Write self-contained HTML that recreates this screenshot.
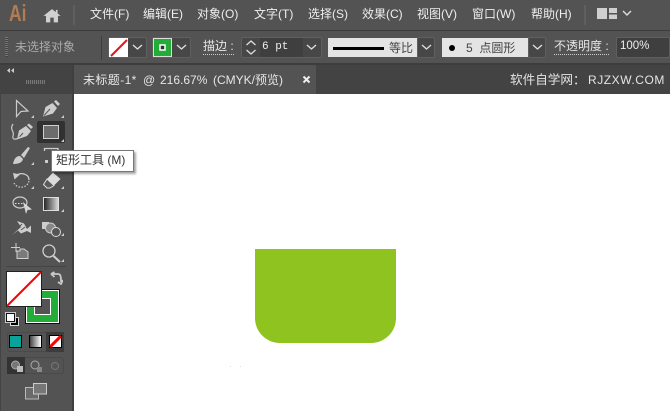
<!DOCTYPE html>
<html lang="zh"><head><meta charset="utf-8"><style>
html,body{margin:0;padding:0;background:#535353}
#a{position:relative;width:670px;height:411px;overflow:hidden;background:#535353;font-family:"Liberation Sans","Noto Sans CJK SC",sans-serif;color:#e6e6e6}
#a div,#a span.t,#a svg{position:absolute}
.t{position:absolute;white-space:nowrap;line-height:16px;font-size:12px}
.m{top:6px;color:#eee}
.dd{background:#474747;border:1px solid #5f5f5f;box-sizing:border-box;border-radius:2px}
</style></head><body><div id="a">
<div style="left:0;top:30px;width:670px;height:1px;background:#3c3c3c"></div>
<div style="left:0;top:64px;width:670px;height:30px;background:#434343"></div>
<div style="left:0;top:63px;width:670px;height:2px;background:#3d3d3d"></div>

<span class="t" style="left:9px;top:0;font-size:23px;line-height:27px;font-weight:bold;color:#b17b55;transform:scaleX(.76);transform-origin:left">Ai</span>
<svg style="left:43px;top:8px" width="18" height="15" viewBox="0 0 21 17"><path d="M10.500 1L0.500 9H3.500V16.500H8.500V11H12.500V16.500H17.500V9H20.500L17 6V2H15V4.500Z" fill="#d0d0d0"/></svg>
<div style="left:73px;top:5px;width:2px;height:20px;background:#5f5f5f"></div>
<span class="t m" style="left:90px">文件(F)</span>
<span class="t m" style="left:143px">编辑(E)</span>
<span class="t m" style="left:197px">对象(O)</span>
<span class="t m" style="left:254px">文字(T)</span>
<span class="t m" style="left:308px">选择(S)</span>
<span class="t m" style="left:362px">效果(C)</span>
<span class="t m" style="left:417px">视图(V)</span>
<span class="t m" style="left:472px">窗口(W)</span>
<span class="t m" style="left:531px">帮助(H)</span>
<div style="left:584px;top:5px;width:2px;height:20px;background:#5f5f5f"></div>
<svg style="left:597px;top:8px" width="38" height="12" viewBox="0 0 38 12"><path d="M0 0H10V11H0ZM12 0H20V5H12ZM12 6.500H20V11H12Z" fill="#cfcfcf"/><path d="M26 3L30 7L34 3" fill="none" stroke="#d8d8d8" stroke-width="1.500"/></svg>

<div style="left:5px;top:37px;width:3px;height:20px;background:repeating-linear-gradient(#777 0 1px,#444 1px 2px)"></div>
<span class="t" style="left:15px;top:39px;color:#aaa;font-size:12px">未选择对象</span>
<div style="left:101px;top:36px;width:1px;height:24px;background:#3f3f3f"></div>

<div class="dd" style="left:108px;top:37px;width:39px;height:21px"></div>
<svg style="left:109px;top:38px" width="19" height="19"><rect width="19" height="19" fill="#fff"/><path d="M2 18L18 2" stroke="#e8141c" stroke-width="2"/></svg>
<svg style="left:132px;top:44px" width="11" height="7"><path d="M1 1L5.500 5L10 1" fill="none" stroke="#ddd" stroke-width="1.400"/></svg>
<div class="dd" style="left:152px;top:37px;width:39px;height:21px"></div>
<svg style="left:153px;top:38px" width="19" height="19"><rect width="19" height="19" fill="#22ac38" /><rect x=".5" y=".5" width="18" height="18" fill="none" stroke="#ddd"/><rect x="7" y="7" width="5" height="5" fill="#333" stroke="#fff" stroke-width="1.500"/></svg>
<svg style="left:176px;top:44px" width="11" height="7"><path d="M1 1L5.500 5L10 1" fill="none" stroke="#ddd" stroke-width="1.400"/></svg>
<span class="t" style="left:203px;top:39px;border-bottom:1px dotted #ccc;line-height:15px">描边 :</span>

<div class="dd" style="left:241px;top:37px;width:81px;height:21px"></div>
<svg style="left:245px;top:39px" width="12" height="17"><path d="M1.500 6L6 2L10.500 6M1.500 11L6 15L10.500 11" fill="none" stroke="#ddd" stroke-width="1.300"/></svg>
<div style="left:260px;top:38px;width:43px;height:19px;background:#3f3f3f"></div>
<span class="t" style="left:262px;top:39px;font-family:'Liberation Mono',monospace;font-size:11px;color:#eee">6 pt</span>
<svg style="left:306px;top:44px" width="11" height="7"><path d="M1 1L5.500 5L10 1" fill="none" stroke="#ddd" stroke-width="1.400"/></svg>

<div style="left:328px;top:38px;width:89px;height:19px;background:#e4e4e4"></div>
<div style="left:333px;top:47px;width:51px;height:3px;background:#000"></div>
<span class="t" style="left:389px;top:40px;color:#444">等比</span>
<div class="dd" style="left:417px;top:37px;width:18px;height:21px"></div>
<svg style="left:421px;top:44px" width="11" height="7"><path d="M1 1L5.500 5L10 1" fill="none" stroke="#ddd" stroke-width="1.400"/></svg>
<div style="left:442px;top:38px;width:86px;height:19px;background:#e4e4e4"></div>
<div style="left:449px;top:45px;width:6px;height:6px;border-radius:50%;background:#000"></div>
<span class="t" style="left:466px;top:40px;color:#444">5&nbsp; 点圆形</span>
<div class="dd" style="left:528px;top:37px;width:18px;height:21px"></div>
<svg style="left:532px;top:44px" width="11" height="7"><path d="M1 1L5.500 5L10 1" fill="none" stroke="#ddd" stroke-width="1.400"/></svg>
<span class="t" style="left:554px;top:39px;border-bottom:1px dotted #ccc;line-height:15px">不透明度 :</span>
<div class="dd" style="left:616px;top:37px;width:54px;height:21px;background:#3f3f3f"></div>
<span class="t" style="left:620px;top:38px;font-size:11.500px;color:#eee">100%</span>

<div style="left:73px;top:65px;width:243px;height:29px;background:#535353"></div>
<span class="t" style="left:83px;top:72px;color:#e6e6e6;letter-spacing:.4px">未标题-1*</span>
<span class="t" style="left:143px;top:72px;color:#e6e6e6">@</span>
<span class="t" style="left:160px;top:72px;color:#e6e6e6">216.67%</span>
<span class="t" style="left:213px;top:72px;color:#e6e6e6">(CMYK/预览)</span>
<svg style="left:302px;top:75px" width="9" height="9"><path d="M1.500 1.500L7.500 7.500M7.500 1.500L1.500 7.500" stroke="#eee" stroke-width="2"/></svg>
<span class="t" style="left:510px;top:72px;font-size:12.600px;color:#e4e4e4">软件自学网：</span>
<span class="t" style="left:588px;top:72px;font-size:12px;color:#e4e4e4;letter-spacing:.55px">RJZXW.COM</span>

<div style="left:0;top:65px;width:72px;height:11px;background:#434343"></div>
<svg style="left:7px;top:68px" width="7" height="5"><path d="M3 0V5L0 2.500ZM7 0V5L4 2.500Z" fill="#ccc"/></svg>
<div style="left:26px;top:80px;width:19px;height:4px;background:repeating-linear-gradient(90deg,#777 0 1px,#4a4a4a 1px 2px)"></div>
<div style="left:72px;top:65px;width:2px;height:346px;background:#3f3f3f"></div>
<div style="left:0;top:76px;width:1px;height:335px;background:#444"></div>

<svg style="left:0;top:90px" width="74" height="240" viewBox="0 0 74 240">
<defs><linearGradient id="gr"><stop offset="0" stop-color="#222"/><stop offset="1" stop-color="#ddd"/></linearGradient></defs>
<rect x="37" y="31" width="28" height="22" rx="2" fill="#313131"/>
<rect x="43.500" y="35.500" width="15" height="13" fill="#6c6c6c" stroke="#d0d0d0"/>
<!-- selection -->
<path d="M16.500 10.500V26.500L21 21.500L28 21Z" fill="none" stroke="#c9c9c9" stroke-width="1.200"/>
<!-- pen -->
<path d="M43 26.500L45.500 17L52.500 13L57 18L53 23.500Z" fill="#cdcdcd"/><path d="M54 11.500L56 10L60 14L58 16Z" fill="#cdcdcd"/><path d="M44 25.500L50 19" stroke="#555"/>
<!-- curvature pen -->
<path d="M17 49.500L19 40.500L26 36L31 41L27 46Z" fill="#cdcdcd"/><path d="M27 35L29 33.500L33 37L31 39Z" fill="#cdcdcd"/><path d="M18 48.500L23 43" stroke="#555"/>
<path d="M13 34C9 40 15 41 13 46C12 50 16 50 20 47" fill="none" stroke="#c9c9c9" stroke-width="1.200"/>
<!-- brush -->
<path d="M13 74C14 69 16 66 20 66L23 69C22 73 18 74 13 74Z" fill="#cdcdcd"/><path d="M21 65L28 57L30 58L24 68Z" fill="#cdcdcd"/>
<!-- shape tool fragment -->
<path d="M44.500 61V58.500H58V61" fill="none" stroke="#cdcdcd" stroke-width="1.300"/><rect x="45" y="70" width="3" height="3" fill="#cdcdcd"/>
<!-- eraser -->
<path d="M47 89L53 82.500L60.500 89L54 95.500Z" fill="#dcdcdc"/><path d="M47 89L54 95.500L50 98H47L43.500 94.500Z" fill="#5a5a5a" stroke="#ddd"/>
<!-- rotate -->
<path d="M15.500 86C19 82 29 83 29 90" fill="none" stroke="#cdcdcd" stroke-width="1.300"/>
<path d="M29 91A8 7.500 0 0 1 13.500 92" fill="none" stroke="#cdcdcd" stroke-width="1.200" stroke-dasharray="1.500 1.500"/>
<path d="M13 83L20 84.500L14.500 89.500Z" fill="#cdcdcd"/>
<!-- shape/width -->
<ellipse cx="20" cy="112.500" rx="7" ry="5.500" fill="none" stroke="#cdcdcd" stroke-width="1.200"/>
<path d="M15 113h1.500v1H15zM18 113h1.500v1H18zM21 113h1.500v1H21z" fill="#ddd"/>
<path d="M23 112L32 119.500L27.500 120L26 124Z" fill="#d5d5d5"/>
<!-- gradient -->
<rect x="43.500" y="107.500" width="15" height="13" fill="url(#gr)" stroke="#ddd"/>
<!-- puppet -->
<path d="M12 145L21 137L17 131L24 133.500L27 139L31 135.500L31 143L27 141L21 143.500L18 140.500Z" fill="#cdcdcd"/><path d="M16 140L22 134M21 140L25 137" stroke="#555"/>
<!-- shape builder -->
<rect x="42" y="132" width="7" height="7" fill="#cdcdcd"/>
<circle cx="50.500" cy="138" r="5" fill="#888" stroke="#ccc"/><circle cx="56" cy="142" r="4.500" fill="#555" stroke="#ddd"/>
<!-- artboard -->
<path d="M20 159H24L28 162V168.500H17V161H20Z" fill="#7a7a7a" stroke="#cfcfcf"/><path d="M11 157.500H20M16 153V162" stroke="#cfcfcf" fill="none"/>
<!-- zoom -->
<circle cx="49" cy="161" r="6" fill="none" stroke="#d0d0d0" stroke-width="1.300"/><path d="M53.500 166L60 172" stroke="#d0d0d0" stroke-width="2"/>
<!-- corner triangles -->
<path d="M34 25v3h-3zM64 25v3h-3zM64 49v3h-3zM34 72v3h-3zM34 96v3h-3zM64 96v3h-3zM64 119v3h-3zM64 143v3h-3zM64 169v3h-3z" fill="#ccc"/>
<rect x="6" y="176" width="60" height="1" fill="#454545"/>
</svg>

<div style="left:6px;top:271px;width:36px;height:36px;background:#fff;box-sizing:border-box;border:1px solid #222;z-index:3"></div>
<svg style="left:6px;top:271px;z-index:4" width="36" height="36"><path d="M1 35L35 1" stroke="#f00" stroke-width="2"/></svg>
<div style="left:25px;top:289px;width:35px;height:35px;background:#22ac38;box-sizing:border-box;border:1px solid #111;box-shadow:inset 0 0 0 1px #fff;z-index:2"></div>
<div style="left:34px;top:298px;width:17px;height:17px;background:#535353;box-sizing:border-box;border:1px solid #fff;z-index:2"></div>
<svg style="left:50px;top:271px" width="13" height="14"><path d="M1 3H8C10.500 3 11 5 11 11M1 3L4.500 1M1 3L4.500 6M8 11L11 13L13 9" fill="none" stroke="#c8c8c8" stroke-width="1.800"/></svg>
<div style="left:10px;top:317px;width:7px;height:7px;background:#000;border:1px solid #ddd;z-index:2"></div>
<div style="left:6px;top:313px;width:7px;height:7px;background:#fff;border:1px solid #111;outline:1px solid #ccc;z-index:3"></div>

<div style="left:7px;top:332px;width:57px;height:20px;border:1px solid #4a4a4a;box-sizing:border-box;border-radius:3px"></div>
<div style="left:46px;top:332px;width:18px;height:20px;background:#3c3c3c"></div>
<div style="left:9px;top:335px;width:11px;height:11px;background:#0aa39a;border:1px solid #000"></div>
<div style="left:29px;top:335px;width:11px;height:11px;background:linear-gradient(90deg,#444,#fff);border:1px solid #000"></div>
<svg style="left:49px;top:335px" width="13" height="13"><rect x=".5" y=".5" width="12" height="12" fill="#fff" stroke="#000"/><path d="M1 12L12 1" stroke="#f00" stroke-width="3"/></svg>

<div style="left:7px;top:357px;width:57px;height:17px;border:1px solid #4a4a4a;box-sizing:border-box;border-radius:3px"></div>
<div style="left:7px;top:357px;width:18px;height:17px;background:#333"></div>
<svg style="left:10px;top:360px" width="56" height="13"><circle cx="5.500" cy="5" r="4" fill="#777" stroke="#aaa"/><rect x="7" y="6" width="6" height="6" fill="#bbb"/><circle cx="25" cy="5" r="4" fill="#555" stroke="#aaa"/><rect x="27" y="7" width="5" height="5" fill="#888"/><circle cx="45" cy="6" r="3.500" fill="#555" stroke="#777"/></svg>
<svg style="left:25px;top:383px" width="23" height="17"><rect x=".5" y="4.500" width="13" height="11.500" fill="#6a6a6a" stroke="#bbb"/><rect x="8.500" y=".5" width="13" height="10.500" fill="#777" stroke="#ccc"/></svg>

<div style="left:74px;top:94px;width:596px;height:317px;background:#fff"></div>
<div style="left:255px;top:249px;width:141px;height:94px;background:#8fc31f;border-radius:0 0 25px 25px"></div>
<div style="left:230px;top:366px;width:1px;height:1px;background:#ddd"></div>
<div style="left:240px;top:366px;width:1px;height:1px;background:#ddd"></div>

<div style="left:51px;top:150px;width:83px;height:22px;background:#fff;box-sizing:border-box;border:1px solid #777;box-shadow:2px 2px 2px rgba(0,0,0,.35);z-index:9"></div>
<span class="t" style="left:56px;top:152px;color:#333;z-index:10;font-size:12px">矩形工具 (M)</span>
</div></body></html>
